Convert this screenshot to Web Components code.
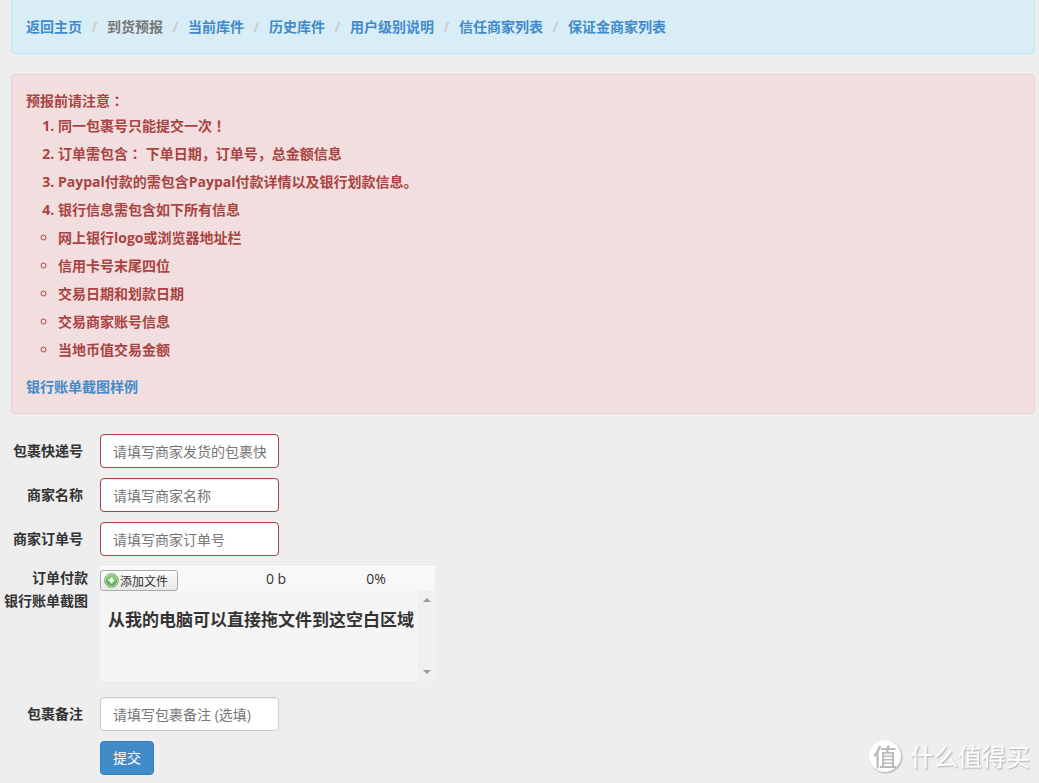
<!DOCTYPE html>
<html lang="zh-CN">
<head>
<meta charset="utf-8">
<title>到货预报</title>
<style>
body{margin:0;background:#eee;color:#333;font:14px/22px "Open Sans","Noto Sans CJK SC",sans-serif}
</style>
</head>
<body>
<forecast-page></forecast-page>

<template id="t-page">
<style>
:host{display:block;padding:0 4px 8px 0}
crumb-nav,notice-box{margin-left:11px}
notice-box{margin-top:20px;margin-bottom:20px}
form{display:flex;flex-direction:column;gap:10px}
file-drop{margin-bottom:5px}
.actions{padding-left:100px}
button{height:34px;padding:0 12px;border:1px solid #357ebd;border-radius:4px;background:#428bca;color:#fff;font:inherit;cursor:pointer}
</style>
<crumb-nav></crumb-nav>
<notice-box></notice-box>
<form>
<field-row label="包裹快递号" hint="请填写商家发货的包裹快递号" invalid></field-row>
<field-row label="商家名称" hint="请填写商家名称" invalid></field-row>
<field-row label="商家订单号" hint="请填写商家订单号" invalid></field-row>
<file-drop>从我的电脑可以直接拖文件到这空白区域</file-drop>
<field-row label="包裹备注" hint="请填写包裹备注 (选填)"></field-row>
<div class="actions"><button type="submit">提交</button></div>
</form>
<brand-mark></brand-mark>
</template>

<template id="t-nav">
<style>
:host{display:block;padding:15px 14px;border:1px solid #bce8f1;border-top:0;border-radius:4px;background:#d9edf7;font-weight:700}
ol{display:flex;flex-wrap:wrap;margin:0;padding:1px 0 0;list-style:none}
li{display:flex}
i{width:25px;text-align:center;color:#ccc;font-style:normal}
a{color:#428bca;text-decoration:none}
.on{color:#777}
</style>
<nav aria-label="导航"><ol>
<li><a href="#">返回主页</a></li>
<li><i>/</i><span class="on" aria-current="page">到货预报</span></li>
<li><i>/</i><a href="#">当前库件</a></li>
<li><i>/</i><a href="#">历史库件</a></li>
<li><i>/</i><a href="#">用户级别说明</a></li>
<li><i>/</i><a href="#">信任商家列表</a></li>
<li><i>/</i><a href="#">保证金商家列表</a></li>
</ol></nav>
</template>

<template id="t-notice">
<style>
:host{display:block;padding:15px 14px;border:1px solid #ebccd1;border-radius:4px;background:#f2dede;color:#a94442;font-weight:700}
p{margin:0;line-height:22px}
ol,ul{margin:0;padding:0 0 0 32px;line-height:28px}
ul{list-style:circle;margin-bottom:12px}
.mid{font-family:"Noto Sans CJK TC",sans-serif;line-height:1}
a{display:block;width:fit-content;color:#428bca;text-decoration:none}
</style>
<p>预报前请注意<span class="mid" lang="zh-Hant">：</span></p>
<ol>
<li>同一包裹号只能提交一次<span class="mid" lang="zh-Hant">！</span></li>
<li>订单需包含<span class="mid" lang="zh-Hant">：</span> 下单日期，订单号，总金额信息</li>
<li>Paypal付款的需包含Paypal付款详情以及银行划款信息。</li>
<li>银行信息需包含如下所有信息</li>
</ol>
<ul>
<li>网上银行logo或浏览器地址栏</li>
<li>信用卡号末尾四位</li>
<li>交易日期和划款日期</li>
<li>交易商家账号信息</li>
<li>当地币值交易金额</li>
</ul>
<a href="#">银行账单截图样例</a>
</template>

<template id="t-field">
<style>
:host{display:flex;align-items:center;gap:17px}
label{width:83px;text-align:right;font-weight:700}
input{box-sizing:border-box;width:179px;height:34px;padding:0 12px;border:1px solid #ccc;border-radius:4px;background:#fff;color:#555;font:inherit;box-shadow:inset 0 1px 1px rgba(0,0,0,.07)}
input::placeholder{color:#777;opacity:1}
:host([invalid]) input{border-color:#a94442}
</style>
<label for="f"></label><input id="f" type="text">
</template>

<template id="t-drop">
<style>
:host{display:flex;align-items:flex-start;gap:12px}
label{width:88px;text-align:right;font-weight:700;line-height:23px;white-space:nowrap;direction:rtl}
.box{width:335px}
.bar{display:grid;grid-template-columns:126px 100px 100px;justify-items:center;box-sizing:border-box;height:25px;border-top:1px solid #fff;background:#f8f8f8}
.bar span{line-height:24px}
.bar button{display:flex;align-items:center;gap:1px;justify-self:start;height:21px;margin-top:3px;padding:0 9px 0 3px;border:1px solid #aaa;border-radius:3px;background:linear-gradient(#fcfcfc,#e8e8e8);color:#333;font:12px/18px "Noto Sans CJK SC",sans-serif}
svg{display:block}
.zone{display:flex;justify-content:space-between;height:90px;background:#f5f5f5}
h4{margin:0;padding:16px 0 0 8px;font-size:17px;line-height:26px;white-space:nowrap}
.scroll{display:flex;flex-direction:column;justify-content:space-between;align-items:center;box-sizing:border-box;width:17px;padding:6px 0;background:#f0f0f0}
:host{padding-bottom:1px}
</style>
<label for="add"><bdi>订单付款</bdi><br><bdi>银行账单截图</bdi></label>
<div class="box">
<div class="bar">
<button id="add" type="button"><svg width="15" height="15" viewBox="0 0 15 15"><circle cx="7.5" cy="7.5" r="6.8" fill="#e4f0df" stroke="#4b9b43" stroke-width=".9"/><circle cx="7.5" cy="7.5" r="5.6" fill="#5fb052"/><path d="M2.5 7a5 5 0 0 1 10 0z" fill="#8ac77c"/><path d="M7.5 4.5v6M4.5 7.5h6" stroke="#fff" stroke-width="2"/></svg>添加文件</button>
<span>0 b</span><span>0%</span>
</div>
<div class="zone"><h4><slot></slot></h4>
<div class="scroll"><svg width="8" height="5" viewBox="0 0 8 5"><path d="M0 5l4-4 4 4z" fill="#999"/></svg><svg width="8" height="5" viewBox="0 0 8 5"><path d="M0 0l4 4 4-4z" fill="#999"/></svg></div></div>
</div>
</template>

<template id="t-mark">
<style>
:host{position:fixed;right:9px;bottom:10px;display:flex;align-items:center;gap:9px;color:#fff;font:24px/34px "Noto Sans CJK SC",sans-serif;text-shadow:1px 1px 1px #bbb,1px 1px 2px #ccc;pointer-events:none}
b{width:32px;height:32px;border-radius:50%;background:#fff;box-shadow:1px 1px 2px #aaa;color:#bbb;font-size:24px;line-height:32px;font-weight:500;text-align:center;text-shadow:none}
</style>
<b>值</b><span>什么值得买</span>
</template>

<script>
class Part extends HTMLElement{
  constructor(){
    super();
    this.attachShadow({mode:"open"}).append(document.getElementById(this.constructor.template).content.cloneNode(true));
  }
}
customElements.define("crumb-nav",class extends Part{static template="t-nav"});
customElements.define("notice-box",class extends Part{static template="t-notice"});
customElements.define("field-row",class extends Part{
  static template="t-field";
  connectedCallback(){
    this.shadowRoot.querySelector("label").textContent=this.getAttribute("label");
    this.shadowRoot.querySelector("input").placeholder=this.getAttribute("hint");
  }
});
customElements.define("file-drop",class extends Part{static template="t-drop"});
customElements.define("brand-mark",class extends Part{static template="t-mark"});
customElements.define("forecast-page",class extends Part{static template="t-page"});
</script>
</body>
</html>
